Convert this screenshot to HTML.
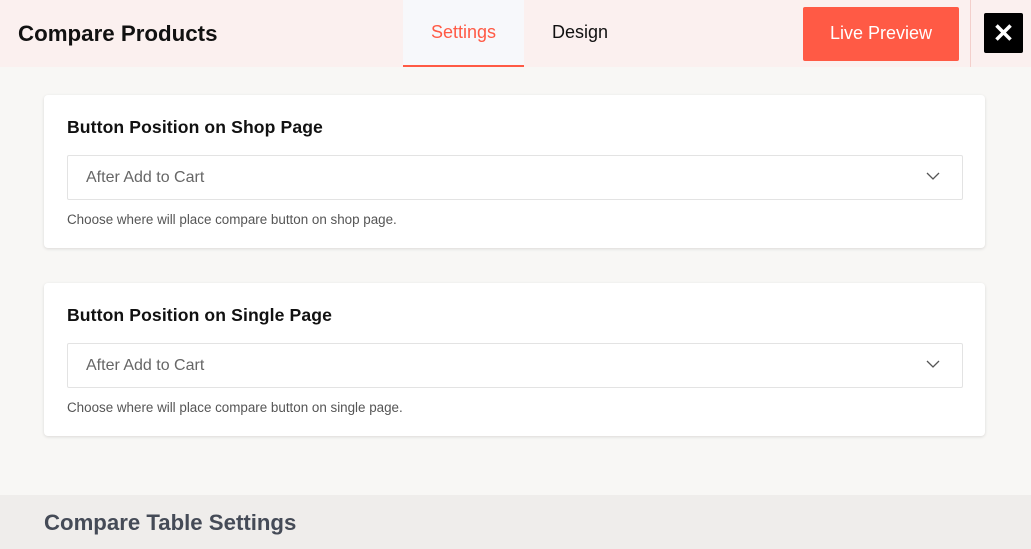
<!DOCTYPE html>
<html><head><style>
*{margin:0;padding:0;box-sizing:border-box}
body{width:1031px;height:549px;overflow:hidden;background:#f8f7f5;font-family:"Liberation Sans",Arial,sans-serif;position:relative}
.hdr{position:absolute;left:0;top:0;width:1031px;height:67px;background:#fbf0ef}
.title{position:absolute;left:18px;top:21px;font-size:22.3px;font-weight:bold;color:#111}
.tab{position:absolute;top:0;height:67px;font-size:18px;line-height:64px;text-align:center}
.t1{left:403px;width:121px;background:#f7f8fb;color:#ff5a45;border-bottom:2px solid #ff5a45}
.t2{left:524px;width:112px;color:#111}
.lp{position:absolute;left:803px;top:7px;width:156px;height:54px;background:#ff5a45;color:#fff;font-size:18px;line-height:52px;text-align:center;border-radius:2px}
.div{position:absolute;left:970px;top:0;width:1px;height:67px;background:#f3cfcb}
.x{position:absolute;left:984px;top:13px;width:39px;height:40px;background:#000;color:#fff;font-size:26px;font-weight:bold;line-height:40px;text-align:center;border-radius:2px}
.card{position:absolute;left:44px;width:941px;height:153px;background:#fff;border-radius:4px;box-shadow:0 1px 3px rgba(0,0,0,.12)}
.card h3{position:absolute;left:23px;top:22px;font-size:17.6px;font-weight:bold;color:#111;letter-spacing:0.1px}
.sel{position:absolute;left:23px;top:60px;width:896px;height:45px;border:1px solid #e3e3e3;border-radius:2px;font-size:16px;color:#666;line-height:44px;padding-left:18px}
.sel svg{position:absolute;right:22px;top:16px}
.help{position:absolute;left:23px;top:117px;font-size:13.4px;color:#555}
.foot{position:absolute;left:0;top:495px;width:1031px;height:54px;background:#efedeb}
.foot div{position:absolute;left:44px;top:15px;font-size:22.2px;font-weight:bold;color:#454b57}
</style></head><body>
<div class="hdr">
<div class="title">Compare Products</div>
<div class="tab t1">Settings</div>
<div class="tab t2">Design</div>
<div class="lp">Live Preview</div>
<div class="div"></div>
<div class="x">✕</div>
</div>
<div class="card" style="top:95px"><h3>Button Position on Shop Page</h3>
<div class="sel">After Add to Cart<svg width="14" height="9" viewBox="0 0 14 9"><path d="M1 1l6 6 6-6" fill="none" stroke="#555" stroke-width="1.3"/></svg></div>
<div class="help">Choose where will place compare button on shop page.</div></div>
<div class="card" style="top:283px"><h3>Button Position on Single Page</h3>
<div class="sel">After Add to Cart<svg width="14" height="9" viewBox="0 0 14 9"><path d="M1 1l6 6 6-6" fill="none" stroke="#555" stroke-width="1.3"/></svg></div>
<div class="help">Choose where will place compare button on single page.</div></div>
<div class="foot"><div>Compare Table Settings</div></div>
</body></html>
